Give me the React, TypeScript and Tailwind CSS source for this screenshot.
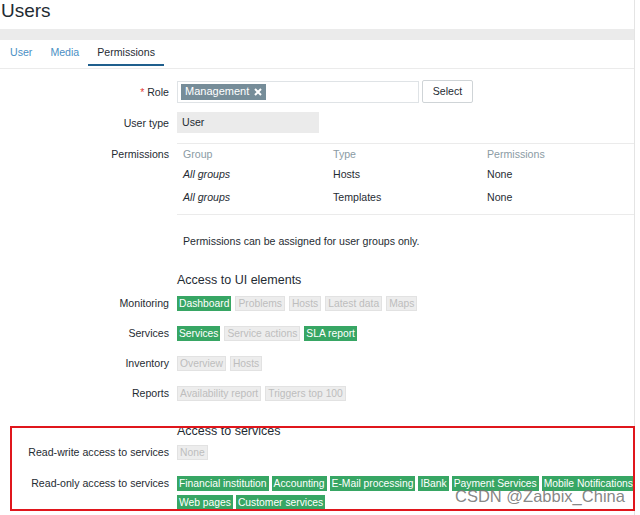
import React from "react";

type Tag = { label: string; on: boolean };

const uiRows: { label: string; tags: Tag[] }[] = [
  {
    label: "Monitoring",
    tags: [
      { label: "Dashboard", on: true },
      { label: "Problems", on: false },
      { label: "Hosts", on: false },
      { label: "Latest data", on: false },
      { label: "Maps", on: false },
    ],
  },
  {
    label: "Services",
    tags: [
      { label: "Services", on: true },
      { label: "Service actions", on: false },
      { label: "SLA report", on: true },
    ],
  },
  {
    label: "Inventory",
    tags: [
      { label: "Overview", on: false },
      { label: "Hosts", on: false },
    ],
  },
  {
    label: "Reports",
    tags: [
      { label: "Availability report", on: false },
      { label: "Triggers top 100", on: false },
    ],
  },
];

const readOnlyLine1 = ["Financial institution", "Accounting", "E-Mail processing", "IBank", "Payment Services", "Mobile Notifications"];
const readOnlyLine2 = ["Web pages", "Customer services"];

function Chip({ label, on }: Tag) {
  return (
    <span
      className={
        on
          ? "h-[15px] px-[2px] leading-[15px] whitespace-nowrap text-[10.3px] bg-[#37a664] text-white"
          : "h-[15px] px-[2px] leading-[13px] whitespace-nowrap text-[10.3px] bg-[#ededed] border border-[#e2e2e2] text-[#bdbdbd]"
      }
    >
      {label}
    </span>
  );
}

function Row({ label, className, children, top }: { label: React.ReactNode; className?: string; children: React.ReactNode; top?: boolean }) {
  return (
    <div className={`grid grid-cols-[169px_1fr] gap-x-[8px] ${top ? "items-start" : "items-center"} ${className ?? ""}`}>
      <div className="text-right leading-[16px]">{label}</div>
      <div>{children}</div>
    </div>
  );
}

export default function App() {
  return (
    <div className="relative w-[640px] h-[515px] overflow-hidden bg-white font-['Liberation_Sans',Arial,sans-serif] text-[10.6px] text-[#1f2c33]">
      <div className="w-[635px] h-full border-r border-[#e4e4e4]">
        <div className="h-[29px] pt-[1px] pl-px text-[19px] leading-[20px] text-[#1f2c33]">Users</div>
        <div className="h-[11px] bg-[#ebebeb]" />

        <div className="h-[29px] flex items-start pl-[1px] border-b border-[#ebebeb]">
          <div className="h-[26px] px-[9px] flex items-center text-[#4a8fc4]">User</div>
          <div className="h-[26px] px-[9px] flex items-center text-[#4a8fc4]">Media</div>
          <div className="h-[26px] px-[9px] flex items-center border-b-2 border-[#1f5f8d] pt-[2px]">Permissions</div>
        </div>

        <Row
          className="mt-[11px] h-[23px]"
          label={
            <>
              <span className="text-[#e33734]">*</span> Role
            </>
          }
        >
          <div className="h-[23px] flex items-center gap-[3px]">
            <div className="w-[242px] h-[22px] border border-[#dfe3e6] flex items-center pl-[3px]">
              <span className="h-[16px] px-[4px] flex items-center gap-[5px] bg-[#768d99] text-white text-[11px]">
                Management
                <svg width="8" height="8" viewBox="0 0 8 8">
                  <path d="M1 1 L7 7 M7 1 L1 7" stroke="white" strokeWidth="2" />
                </svg>
              </span>
            </div>
            <button className="w-[51px] h-[23px] border border-[#cfd4d7] rounded-[2px] bg-white text-[#1f2c33] text-[10.6px]">
              Select
            </button>
          </div>
        </Row>

        <Row className="mt-[9px] h-[21px]" label="User type">
          <div className="w-[142px] h-[21px] bg-[#ebebeb] flex items-center pl-[5px]">User</div>
        </Row>

        <Row className="mt-[10px]" label={<div className="mt-[3px]">Permissions</div>} top>
          <div className="border-t border-b border-[#ebebeb] pb-[6px]">
            <div className="grid grid-cols-[150px_154px_1fr] h-[21px] items-center text-[#8b9ba4]">
              <div className="pl-[6px]">Group</div>
              <div className="pl-[6px]">Type</div>
              <div className="pl-[6px]">Permissions</div>
            </div>
            <div className="grid grid-cols-[150px_154px_1fr] h-[20px] items-center">
              <div className="pl-[6px] italic">All groups</div>
              <div className="pl-[6px]">Hosts</div>
              <div className="pl-[6px]">None</div>
            </div>
            <div className="grid grid-cols-[150px_154px_1fr] h-[20px] mt-[3px] items-center">
              <div className="pl-[6px] italic">All groups</div>
              <div className="pl-[6px]">Templates</div>
              <div className="pl-[6px]">None</div>
            </div>
          </div>
          <div className="mt-[19px] pl-[6px] leading-[14px]">Permissions can be assigned for user groups only.</div>
        </Row>

        <Row className="mt-[24px]" label="">
          <div className="text-[12.5px] leading-[16px]">Access to UI elements</div>
        </Row>

        {uiRows.map((row, i) => (
          <Row key={row.label} className={`${i === 0 ? "mt-[7px]" : "mt-[14px]"} h-[16px]`} label={row.label}>
            <div className="h-[16px] flex items-center gap-[4px]">
              {row.tags.map((t) => (
                <Chip key={t.label} {...t} />
              ))}
            </div>
          </Row>
        ))}

        <Row className="mt-[22px]" label="">
          <div className="text-[12.5px] leading-[16px]">Access to services</div>
        </Row>

        <Row className="mt-[5px] h-[16px]" label="Read-write access to services">
          <div className="h-[16px] flex items-center">
            <Chip label="None" on={false} />
          </div>
        </Row>

        <Row className="mt-[15px]" label="Read-only access to services" top>
          <div className="flex flex-col gap-[3px]">
            <div className="h-[16px] flex items-center gap-[3px] whitespace-nowrap">
              {readOnlyLine1.map((l) => (
                <Chip key={l} label={l} on />
              ))}
            </div>
            <div className="h-[16px] flex items-center gap-[3px]">
              {readOnlyLine2.map((l) => (
                <Chip key={l} label={l} on />
              ))}
            </div>
          </div>
        </Row>
      </div>

      {/* annotation box */}
      <div className="absolute left-[10px] top-[426px] w-[625px] h-[85px] border-2 border-[#e0161c]" />
      <div className="absolute left-[455px] top-[486px] text-[16.5px] leading-[20px] text-[#777777]/90">CSDN @Zabbix_China</div>
    </div>
  );
}
